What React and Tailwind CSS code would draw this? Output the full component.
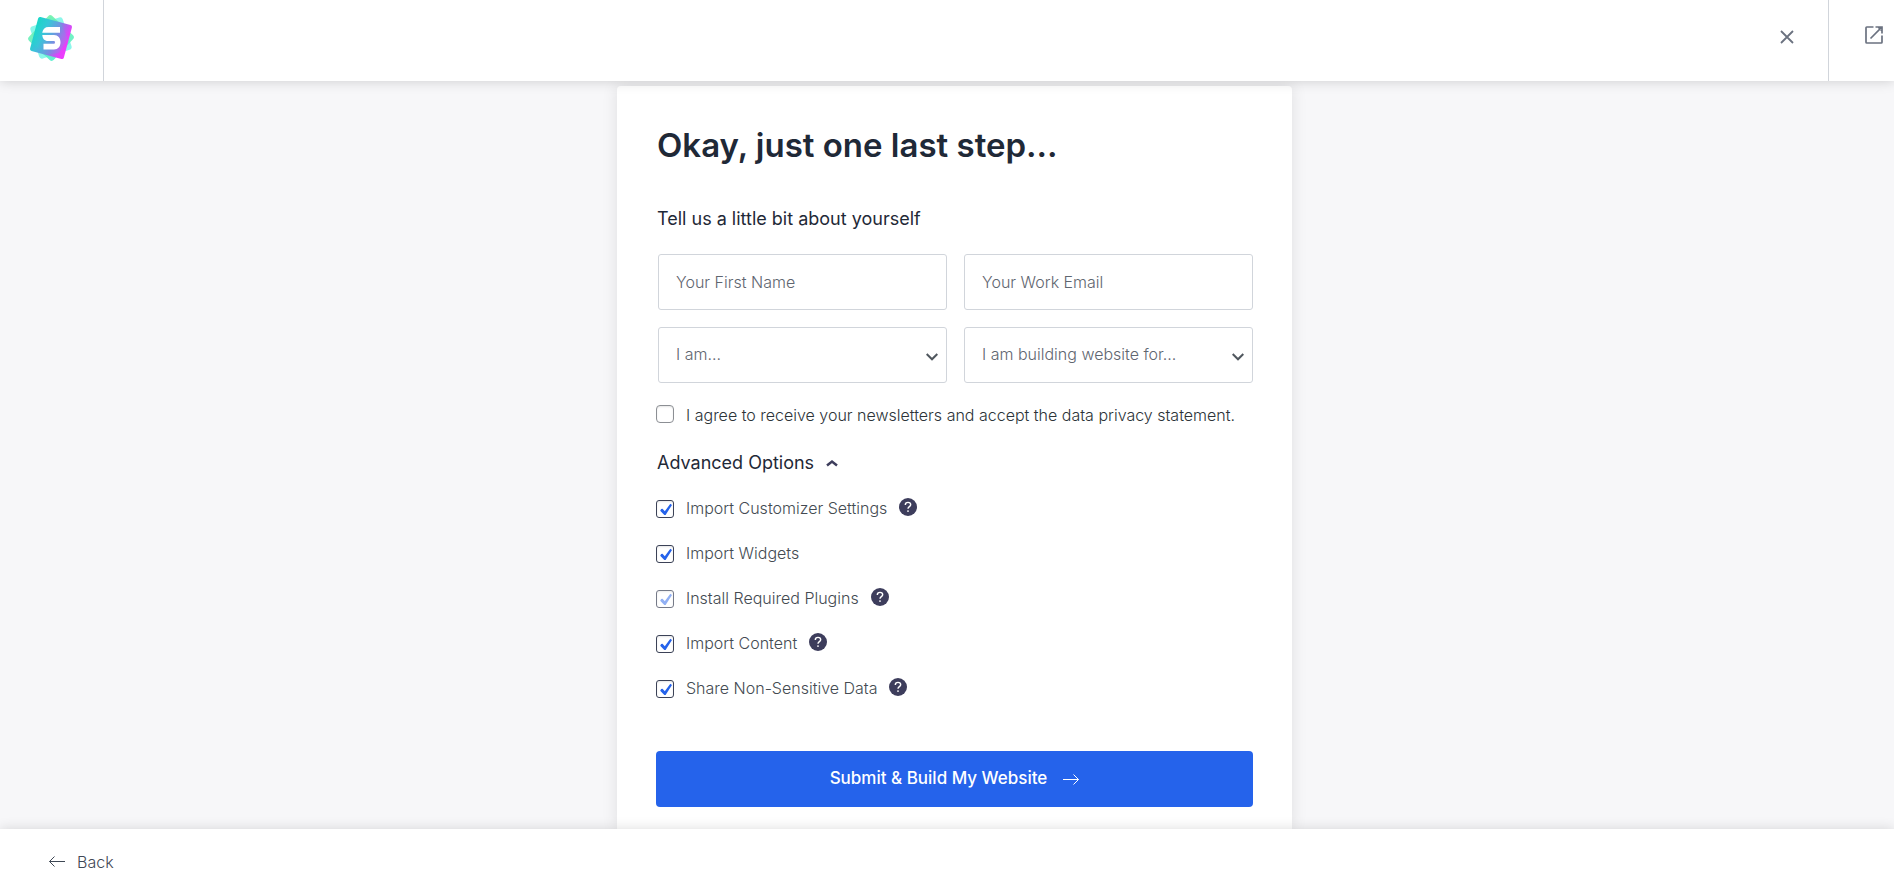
import { useState } from "react";

function Logo() {
  return (
    <svg viewBox="0 0 46 48" className="h-12 w-[46px]" role="img" aria-label="Starter Templates">
      <defs>
        <linearGradient id="tile" x1="2" y1="20" x2="44" y2="28" gradientUnits="userSpaceOnUse">
          <stop offset="0" stopColor="#12dcc4" />
          <stop offset="0.3" stopColor="#3fbfdc" />
          <stop offset="0.6" stopColor="#8a7ee6" />
          <stop offset="0.85" stopColor="#e63ffa" />
          <stop offset="1" stopColor="#f03cff" />
        </linearGradient>
        <linearGradient id="green" x1="0" y1="10" x2="46" y2="40" gradientUnits="userSpaceOnUse">
          <stop offset="0" stopColor="#7af2a8" />
          <stop offset="1" stopColor="#4eeed0" />
        </linearGradient>
      </defs>
      <rect x="6" y="7" width="34" height="34" rx="3" fill="#8cf7ea" transform="rotate(-18 23 24)" />
      <rect x="6" y="7" width="34" height="34" rx="3" fill="url(#green)" opacity="0.9" transform="rotate(43 23 24)" />
      <rect x="5.500" y="6.500" width="35" height="35" rx="2" fill="url(#tile)" transform="rotate(15 23 24)" />
      <path d="M23 2L8 14 5 29l10 12 16-2 9-14-6-14z" fill="#14f0c8" opacity="0.14" />
      <path
        fill="#fff"
        d="M32 13v5.700H14.200C15 15 17 13 20.500 13zM14.300 21H26c4 0 6.500 3 6.500 7.200 0 4.300-2.500 7.200-6.500 7.200H15.500v-5.600H26c1.300 0 1.300-2.800 0-2.800h-6c-3.500 0-5.500-2.200-5.700-6z"
      />
    </svg>
  );
}

function Arrow({ className }) {
  return (
    <svg viewBox="0 0 16 12" fill="none" stroke="currentColor" className={className} aria-hidden="true">
      <path d="M0 6.500h15.500M10.500 1.500l5 5-5 5" />
    </svg>
  );
}

function CheckRow({ label, help, disabled, initial = true, textClass = "pb-[2px] text-[#444b52]" }) {
  const [checked, setChecked] = useState(initial);
  return (
    <div className="flex h-[18px] items-center">
      <label className="flex items-center gap-3 text-base leading-[18px] font-light">
        <span className="grid size-[18px]">
          <input
            type="checkbox"
            checked={checked}
            disabled={disabled}
            onChange={(e) => setChecked(e.target.checked)}
            className={`col-start-1 row-start-1 size-[18px] appearance-none border bg-white shadow-[inset_0_1px_2px_rgba(0,0,0,0.1)] disabled:opacity-70 ${
              checked ? "rounded-[3px] border-[#3c4257]" : "rounded-[4px] border-[#8c8f94]"
            }`}
          />
          {checked && (
            <svg
              viewBox="0 0 18 18"
              className={`pointer-events-none relative col-start-1 row-start-1 size-[18px] ${disabled ? "opacity-50" : ""}`}
              aria-hidden="true"
            >
              <path d="M14.300 3.800l1.700 1.100-6.400 10H8.300L4.200 10.700l.9-1.700 1.400-.3 2.300 2.600z" fill="#2563eb" />
            </svg>
          )}
        </span>
        <span className={textClass}>{label}</span>
      </label>
      {help && (
        <button type="button" aria-label={`About ${label}`} className="mb-1 ml-3">
          <svg viewBox="0 0 18 18" className="block size-[18px]" aria-hidden="true">
            <circle cx="9" cy="9" r="9" fill="#3d3d5c" />
            <path
              d="M6.300 6.900c0-1.500 1.200-2.500 2.700-2.500s2.700 1 2.700 2.300c0 1.900-2.700 1.900-2.700 4"
              fill="none"
              stroke="#fff"
              strokeWidth="1.400"
            />
            <circle cx="9" cy="13.100" r="0.900" fill="#fff" />
          </svg>
        </button>
      )}
    </div>
  );
}

const field =
  "h-14 w-full rounded-[3px] border border-[#d1d5db] bg-white px-[17px] text-base font-light text-[#5f6670] placeholder:text-[#5f6670]";

function SelectField({ label, options }) {
  return (
    <div className="grid">
      <select aria-label={label} defaultValue="" className={`${field} col-start-1 row-start-1 appearance-none pb-[2px]`}>
        <option value="">{label}</option>
        {options.map((o) => (
          <option key={o}>{o}</option>
        ))}
      </select>
      <svg
        viewBox="0 0 12 8"
        fill="none"
        stroke="#50575e"
        strokeWidth="2"
        className="pointer-events-none relative col-start-1 row-start-1 mt-1 mr-[9px] h-2 w-3 self-center justify-self-end"
        aria-hidden="true"
      >
        <path d="M0.700 1l5.300 5.300L11.300 1" />
      </svg>
    </div>
  );
}

export default function App() {
  const [open, setOpen] = useState(true);
  return (
    <div className="flex min-h-screen flex-col bg-[#f7f7f9] font-['Inter',sans-serif]">
      <header className="sticky top-0 z-10 flex h-[81px] bg-white shadow-[0_0_12px_rgba(0,0,0,0.18)]">
        <div className="flex w-[104px] justify-center border-r border-[#d1d5db] pt-[14px] pr-[2px]">
          <Logo />
        </div>
        <div className="ml-auto flex w-[84px] items-start justify-center border-r border-[#d1d5db] pt-[30px]">
          <button type="button" aria-label="Close" className="text-[#6b7280]">
            <svg viewBox="0 0 14 14" fill="none" stroke="currentColor" strokeWidth="1.800" className="block size-[14px]">
              <path d="M1 1l12 12M13 1L1 13" />
            </svg>
          </button>
        </div>
        <div className="w-[65px] pt-[26px] pl-9">
          <a href="#preview" aria-label="Open in new tab" className="block text-[#6b7280]">
            <svg viewBox="0 0 18 18" fill="none" stroke="currentColor" strokeWidth="1.700" className="block size-[18px]">
              <path d="M8.500 1H1.800a.8.8 0 0 0-.8.800v14.400a.8.8 0 0 0 .8.800h14.400a.8.800 0 0 0 .8-.8V9.500M10.500 1H17v6.500M16.800 1.200L5.500 12.500M13.500 1.500l3 3" />
            </svg>
          </a>
        </div>
      </header>

      <main className="flex flex-1 justify-center pt-[5px] pl-[15px]">
        <form
          onSubmit={(e) => e.preventDefault()}
          className="w-full max-w-[675px] rounded-t-[4px] bg-white px-[39px] pt-[38px] pb-[22px] shadow-[0_0_16px_rgba(0,0,0,0.1)]"
        >
          <h1 className="pl-px text-[33px] leading-[42px] font-semibold text-[#1f2937]">Okay, just one last step...</h1>
          <h2 className="mt-[41px] pl-px text-lg leading-6 text-[#1f2937]">Tell us a little bit about yourself</h2>
          <div className="mt-[23px] ml-[2px] grid grid-cols-2 gap-[17px]">
            <input type="text" aria-label="Your First Name" placeholder="Your First Name" className={field} />
            <input type="email" aria-label="Your Work Email" placeholder="Your Work Email" className={field} />
            <SelectField label="I am..." options={["Beginner", "Intermediate", "Expert"]} />
            <SelectField label="I am building website for..." options={["Myself", "My company", "A client"]} />
          </div>
          <div className="mt-[22px]">
            <CheckRow
              label="I agree to receive your newsletters and accept the data privacy statement."
              initial={false}
              textClass="pt-[2px] text-[#2c3338]"
            />
          </div>
          <button
            type="button"
            aria-expanded={open}
            onClick={() => setOpen(!open)}
            className="mt-7 flex items-center gap-3 pl-px text-lg leading-6 text-[#1f2937]"
          >
            Advanced Options
            <svg viewBox="0 0 12 8" fill="none" stroke="#3d3d5c" strokeWidth="2.500" className="h-2 w-3" aria-hidden="true">
              <path d="M1 6.500l5-4 5 4" />
            </svg>
          </button>
          {open && (
            <div className="mt-[25px] flex flex-col gap-[27px]">
              <CheckRow label="Import Customizer Settings" help />
              <CheckRow label="Import Widgets" />
              <CheckRow label="Install Required Plugins" help disabled />
              <CheckRow label="Import Content" help />
              <CheckRow label="Share Non-Sensitive Data" help />
            </div>
          )}
          <button
            type="submit"
            className="mt-[53px] flex h-14 w-full items-center justify-center gap-4 rounded-[4px] bg-[#2563eb] text-[17px] font-medium text-white"
          >
            Submit &amp; Build My Website
            <Arrow className="h-3 w-4" />
          </button>
        </form>
      </main>

      <footer className="sticky bottom-0 z-10 flex h-[57px] items-center bg-white pt-2 pl-[49px] shadow-[0_0_12px_rgba(0,0,0,0.14)]">
        <button type="button" className="flex items-center gap-3 text-base font-light text-[#3f4855]">
          <Arrow className="h-3 w-4 rotate-180" />
          Back
        </button>
      </footer>
    </div>
  );
}
